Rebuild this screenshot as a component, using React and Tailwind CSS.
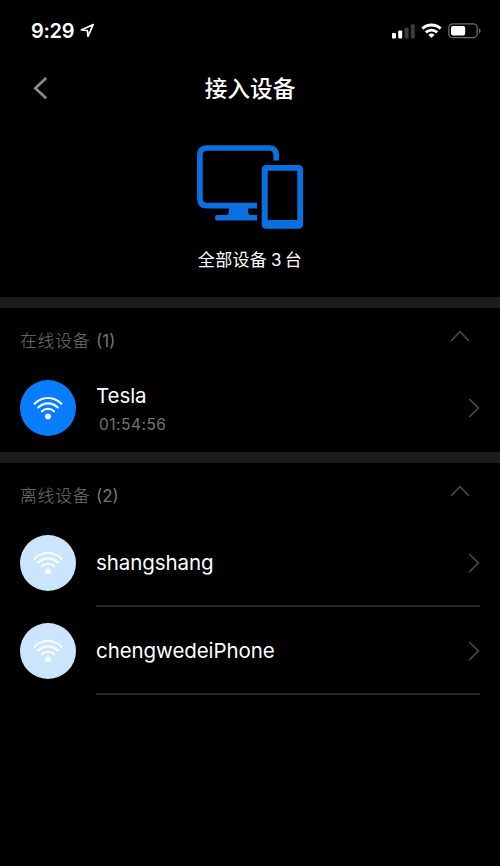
const latin = 'font-[Inter,"Noto_Sans_CJK_SC",sans-serif]';
const cjk = 'font-["Noto_Sans_CJK_SC",sans-serif]';

function StatusBar() {
  return (
    <div className="flex h-[61px] items-center justify-between pl-[31px] pr-[19px]">
      <div className="flex items-center gap-[5px]">
        <span className="w-[44px] whitespace-nowrap text-[20px] font-semibold leading-6 tracking-[-0.3px]">9:29</span>
        <svg width="15" height="15" viewBox="0 0 15 15" fill="none" stroke="white" strokeWidth="1.7" strokeLinejoin="round">
          <path d="M13.2 1.5 L1.3 6.9 L7.4 7.5 L8 13.4 Z" />
        </svg>
      </div>
      <svg width="90" height="16" viewBox="0 0 90 16">
        <rect x="1" y="10" width="4" height="5.4" rx="1" fill="white" />
        <rect x="7.2" y="7.6" width="4" height="7.8" rx="1" fill="white" />
        <rect x="13.6" y="4.6" width="4" height="10.8" rx="1" fill="#3b3b3b" />
        <rect x="19.8" y="1.2" width="4" height="14.2" rx="1" fill="#3b3b3b" />
        <g fill="none" stroke="white" strokeWidth="2.9">
          <path d="M31.4 5.6 C36.4 0.7 44.6 0.7 49.6 5.6" />
          <path d="M34.8 9.4 C38 6.3 43 6.3 46.2 9.4" />
        </g>
        <path d="M37.4 11.8 C39.2 10.1 41.8 10.1 43.6 11.8 L40.5 15 Z" fill="white" />
        <rect x="57.8" y="0.9" width="28.4" height="13.8" rx="4" fill="none" stroke="#6c6c6c" strokeWidth="1.3" />
        <rect x="60" y="3" width="14.2" height="9.6" rx="2" fill="white" />
        <path d="M88 5.2 C90 6.2 90 9.4 88 10.4 Z" fill="#6c6c6c" />
      </svg>
    </div>
  );
}

function DevicesIcon() {
  return (
    <svg width="108" height="86" viewBox="196 144 108 86" fill="none" stroke="#0a70e0">
      <path d="M276.2 160.6 V155 Q276.2 148 269.2 148 H207 Q199.9 148 199.9 155 V198.8 Q199.9 205.7 207 205.7 H257" strokeWidth="5.7" />
      <path d="M228.8 207 H248.2 V212 Q248.2 215 251 215 H257 V220.6 H217.8 A2.8 2.8 0 0 1 217.8 215 H226 Q228.8 215 228.8 212 Z" fill="#0a70e0" stroke="none" />
      <path fillRule="evenodd" fill="#0a70e0" stroke="none" d="M266.5 165 H298.3 Q303.1 165 303.1 169.8 V224 Q303.1 228.8 298.3 228.8 H266.5 Q261.7 228.8 261.7 224 V169.8 Q261.7 165 266.5 165 Z M267.7 170.8 V220 H297.3 V170.8 Z" />
    </svg>
  );
}

function Chevron({ up }) {
  return up ? (
    <svg width="20" height="12" viewBox="0 0 20 12" fill="none" stroke="#484848" strokeWidth="1.7">
      <path d="M1 11 L10 1.7 L19 11" />
    </svg>
  ) : (
    <svg width="12" height="20" viewBox="0 0 12 20" fill="none" stroke="#484848" strokeWidth="1.7">
      <path d="M1.2 1 L10.4 10 L1.2 19" />
    </svg>
  );
}

function SectionHeader({ label, count }) {
  return (
    <div className="flex h-[56px] items-start justify-between pl-5 pr-[30px] text-[#747474]">
      <div className="mt-[20px] flex h-6 items-center">
        <span className={`${cjk} text-[17px] font-light leading-6 tracking-[0.5px]`}>{label}</span>
        <span className="ml-[6px] mt-px text-[17px] leading-6">({count})</span>
      </div>
      <div className="mt-[22px]">
        <Chevron up />
      </div>
    </div>
  );
}

function DeviceRow({ name, time, online, line }) {
  return (
    <div className="flex h-[88px] pl-5 pr-5">
      <div className={`mt-4 flex size-[56px] shrink-0 justify-center rounded-full ${online ? "bg-[#087dff]" : "bg-[#cce5ff]"}`}>
        <svg className="mt-[16px]" width="32" height="25" viewBox="0 0 32 25" fill="none" stroke="white" strokeWidth="2.1" strokeLinecap="round">
          <path d="M2.6 7.8 C10 0 22 0 29.4 7.8" />
          <path d="M6.2 11.6 C11.8 5.9 20.2 5.9 25.8 11.6" />
          <path d="M10 15.2 C13.4 11.9 18.6 11.9 22 15.2" />
          <circle cx="16" cy="20.4" r="2.9" fill="white" stroke="none" />
        </svg>
      </div>
      <div className={`ml-5 flex flex-1 items-center justify-between border-b-2 pt-[2px] ${line ? "border-[#272727]" : "border-transparent"}`}>
        <div>
          <div className="text-[20.5px] leading-[26px] tracking-[-0.08px]">{name}</div>
          {time && <div className="-mb-px ml-[3px] mt-[6px] text-[15.5px] leading-5 tracking-[0.5px] text-[#747474]">{time}</div>}
        </div>
        <Chevron />
      </div>
    </div>
  );
}

export default function App() {
  return (
    <div className={`${latin} flex h-[866px] w-[500px] flex-col overflow-hidden bg-black text-white`}>
      <StatusBar />
      <header className="grid h-[54px] grid-cols-[1fr_auto_1fr] items-center">
        <svg className="ml-[33px]" width="15" height="24" viewBox="0 0 15 24" fill="none" stroke="#8b8b8b" strokeWidth="2.7">
          <path d="M13.2 2 L2.3 12.2 L13.2 22.2" />
        </svg>
        <h1 className={`${cjk} text-[22.7px] font-medium leading-8`}>接入设备</h1>
      </header>
      <div className="flex h-[182px] flex-col items-center pt-[29px]">
        <DevicesIcon />
        <p className={`${cjk} mt-[17px] flex text-[17px] leading-6 tracking-[0.3px]`}>
          <span>全部设备</span>
          <span className={`${latin} ml-[4px] mr-[3px] mt-px`}>3</span>
          <span>台</span>
        </p>
      </div>
      <div className="h-[11px] bg-[#1c1c1c]" />
      <section>
        <SectionHeader label="在线设备" count={1} />
        <DeviceRow name="Tesla" time="01:54:56" online />
      </section>
      <div className="h-[11px] bg-[#1c1c1c]" />
      <section>
        <SectionHeader label="离线设备" count={2} />
        <DeviceRow name="shangshang" line />
        <DeviceRow name="chengwedeiPhone" line />
      </section>
    </div>
  );
}
